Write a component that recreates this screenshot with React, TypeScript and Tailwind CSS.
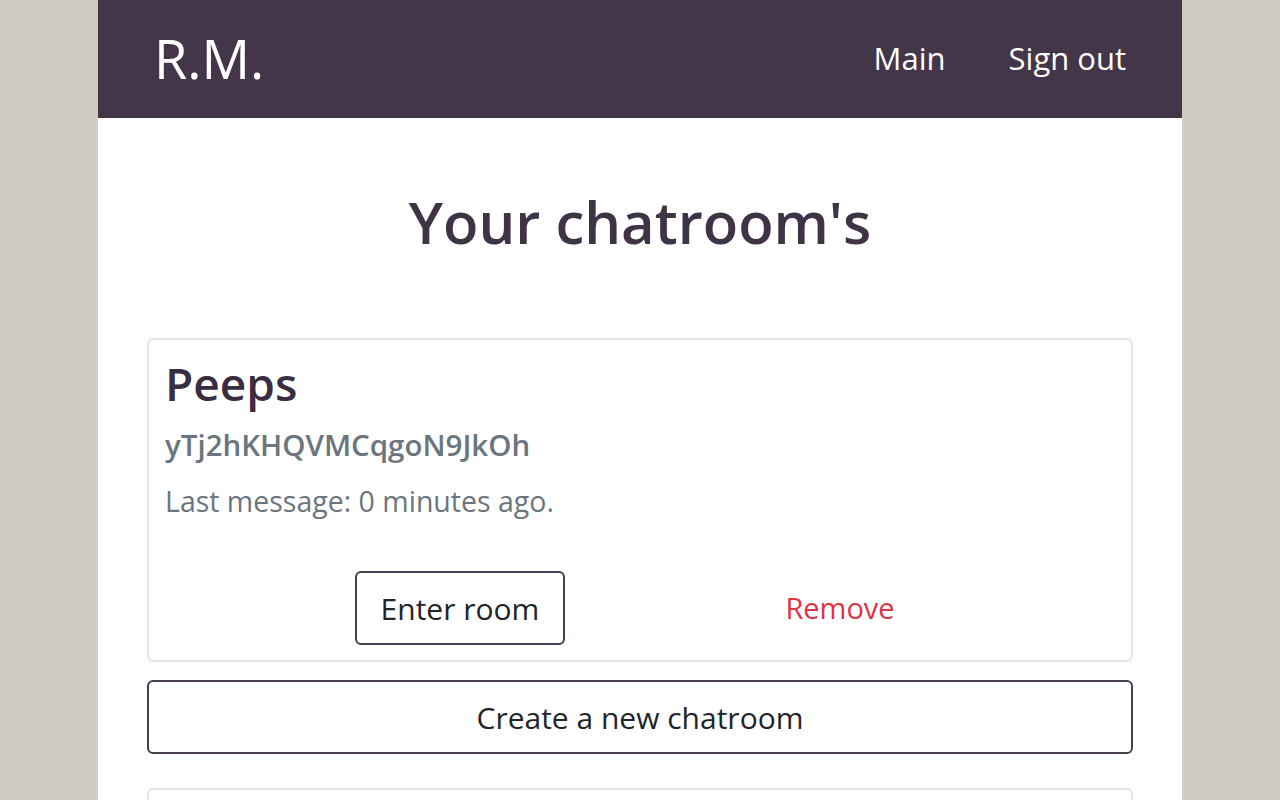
import React from "react";

export default function App() {
  const font = { fontFamily: '"Open Sans", "Noto Sans", Arial, sans-serif' };
  return (
    <div className="min-h-screen bg-[#cfcdc2] flex justify-center" style={font}>
      <div className="w-[1084px] bg-white min-h-screen">
        <nav className="h-[118px] bg-[#433649] flex items-center justify-between pl-[56px] pr-[56px]">
          <div className="text-white text-[54px] leading-none pb-[2px]">R.M.</div>
          <div className="flex items-center gap-[63px] text-white text-[31px] pb-[2px]">
            <span>Main</span>
            <span>Sign out</span>
          </div>
        </nav>
        <div className="px-[49px]">
          <h1 className="text-center text-[58px] font-semibold text-[#3f3346] leading-none pt-[75px]">
            Your chatroom's
          </h1>
          <div className="mt-[87px] border-2 border-[#e5e5e5] rounded-[6px] h-[324px] flex flex-col">
            <div className="pl-[16px] pt-[20px]">
              <div className="text-[46px] font-semibold text-[#3a2d40] leading-none">Peeps</div>
              <div className="mt-[24px] text-[29.5px] font-semibold text-[#6c757d] leading-none">yTj2hKHQVMCqgoN9JkOh</div>
              <div className="mt-[27px] text-[28.5px] text-[#6c757d] leading-none">Last message: 0 minutes ago.</div>
            </div>
            <div className="flex items-center pl-[206px] mt-[56px]">
              <button className="w-[210px] h-[74px] border-2 border-[#4a3d50] rounded-[6px] text-[30px] text-[#212529]">
                Enter room
              </button>
              <button className="ml-[222px] w-[106px] h-[74px] text-[29px] text-[#dc3545] whitespace-nowrap flex items-center justify-center">
                Remove
              </button>
            </div>
          </div>
          <button className="mt-[18px] w-full h-[74px] border-2 border-[#4a3d50] rounded-[6px] text-[30px] text-[#212529]">
            Create a new chatroom
          </button>
          <div className="mt-[34px] border-2 border-[#e5e5e5] rounded-[6px] h-[200px]"></div>
        </div>
      </div>
    </div>
  );
}
